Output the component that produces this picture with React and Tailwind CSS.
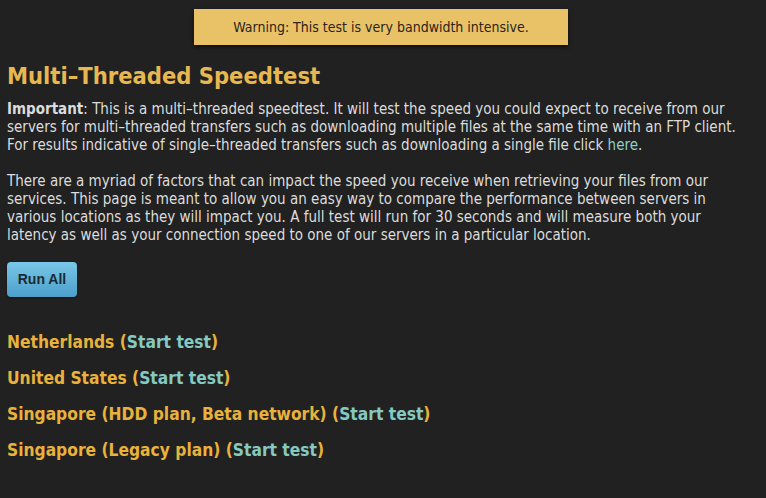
export default function App() {
  const servers = [
    'Netherlands',
    'United States',
    'Singapore (HDD plan, Beta network)',
    'Singapore (Legacy plan)',
  ];

  return (
    <div
      className="w-[766px] h-[498px] overflow-hidden bg-[#212121] text-[#dcdcdc] px-[7px]"
      style={{ fontFamily: '"DejaVu Sans Condensed", "DejaVu Sans", sans-serif' }}
    >
      <div className="flex justify-center pt-[9px]">
        <div className="w-[374px] h-[36px] bg-[#e9c268] text-[#2a2419] text-[14px] flex items-center justify-center shadow-[0_2px_4px_rgba(0,0,0,0.6)] ml-[-4px]">
          Warning: This test is very bandwidth intensive.
        </div>
      </div>

      <h1 className="mt-[16px] text-[23.5px] leading-[30px] text-[#e8b850] font-semibold">
        Multi–Threaded Speedtest
      </h1>

      <div className="w-[740px]">
        <p className="mt-[9px] text-[15px] leading-[18px]">
          <b className="font-bold">Important</b>: This is a multi–threaded speedtest. It will test the speed you could expect to receive from our servers for multi–threaded transfers such as downloading multiple files at the same time with an FTP client. For results indicative of single–threaded transfers such as downloading a single file click{' '}
          <a className="text-[#8fd0c4]">here</a>.
        </p>

        <p className="mt-[18px] text-[15px] leading-[18px]">
          There are a myriad of factors that can impact the speed you receive when retrieving your files from our services. This page is meant to allow you an easy way to compare the performance between servers in various locations as they will impact you. A full test will run for 30 seconds and will measure both your latency as well as your connection speed to one of our servers in a particular location.
        </p>
      </div>

      <button
        className="mt-[18px] w-[70px] h-[35px] rounded-[4px] bg-gradient-to-b from-[#79c7e8] to-[#4c9fcb] text-[#1a2a33] text-[14px] font-bold shadow-[0_1px_2px_rgba(0,0,0,0.5)]"
        style={{ fontFamily: '"Liberation Sans", Arial, sans-serif' }}
      >
        Run All
      </button>

      <div className="mt-[34px] flex flex-col gap-[14px]">
        {servers.map((s) => (
          <div key={s} className="text-[17.25px] leading-[22px] font-bold text-[#e9b23c]">
            {s} (<a className="text-[#86c9c0]">Start test</a>)
          </div>
        ))}
      </div>
    </div>
  );
}
